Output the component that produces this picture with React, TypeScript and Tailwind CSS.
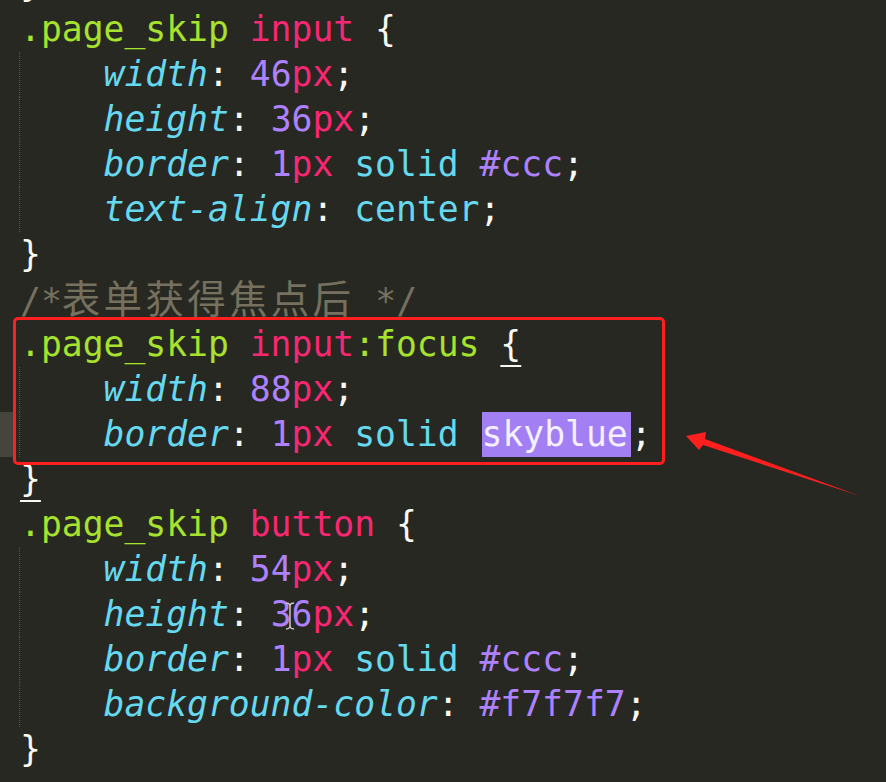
import React from 'react';

const G = 'text-[#a6e22e]';
const R = 'text-[#f92672]';
const C = 'text-[#66d9ef]';
const P = 'text-[#ae81ff]';
const W = 'text-[#f8f8f2]';

type LineProps = { indent?: boolean; mark?: boolean; children?: React.ReactNode };

const Line = ({ indent, mark, children }: LineProps) => (
  <div className="flex h-[45px] whitespace-pre leading-[45px]">
    <div className="flex w-[19px] shrink-0">
      {mark && <div className="w-[13px] bg-[#46453d]" />}
    </div>
    <div className={indent ? 'border-l border-dotted border-[#55554c]' : 'border-l border-transparent'}>
      {indent && '    '}
      {children}
    </div>
  </div>
);

const Prop = ({ name }: { name: string }) => (
  <>
    <span className={`${C} italic`}>{name}</span>
    <span className={W}>: </span>
  </>
);

const Px = ({ n }: { n: string }) => (
  <>
    <span className={P}>{n}</span>
    <span className={R}>px</span>
  </>
);

const Semi = () => <span className={W}>;</span>;

const App = () => {
  return (
    <div className="relative h-[782px] w-[886px] overflow-hidden bg-[#272822] font-[family-name:'DejaVu_Sans_Mono','Noto_Sans_CJK_SC',monospace] text-[34.7px]">
      <div className="-mt-[38px] flex flex-col">
        <Line><span className={W}>{'}'}</span></Line>
        <Line>
          <span className={G}>.page_skip </span>
          <span className={R}>input</span>
          <span className={W}> {'{'}</span>
        </Line>
        <Line indent><Prop name="width" /><Px n="46" /><Semi /></Line>
        <Line indent><Prop name="height" /><Px n="36" /><Semi /></Line>
        <Line indent>
          <Prop name="border" /><Px n="1" />
          <span className={C}> solid </span>
          <span className={P}>#ccc</span>
          <Semi />
        </Line>
        <Line indent>
          <Prop name="text-align" />
          <span className={C}>center</span>
          <Semi />
        </Line>
        <Line><span className={W}>{'}'}</span></Line>
        <Line>
          <span className="text-[#75715e]">
            /*<span className="text-[38.5px] leading-[45px] tracking-[3.3px]">表单获得焦点后</span> */
          </span>
        </Line>
        <Line>
          <span className={G}>.page_skip </span>
          <span className={R}>input</span>
          <span className={G}>:focus </span>
          <span className={`${W} underline decoration-2 underline-offset-[9px]`}>{'{'}</span>
        </Line>
        <Line indent><Prop name="width" /><Px n="88" /><Semi /></Line>
        <Line indent mark>
          <Prop name="border" /><Px n="1" />
          <span className={C}> solid </span>
          <span className="ml-[2px] inline-block h-[45px] bg-[#a37ff4] pr-[3px] text-[#f4f0ff]">skyblue</span>
          <Semi />
        </Line>
        <Line><span className={`${W} underline decoration-2 underline-offset-[9px]`}>{'}'}</span></Line>
        <Line>
          <span className={G}>.page_skip </span>
          <span className={R}>button</span>
          <span className={W}> {'{'}</span>
        </Line>
        <Line indent><Prop name="width" /><Px n="54" /><Semi /></Line>
        <Line indent><Prop name="height" /><Px n="36" /><Semi /></Line>
        <Line indent>
          <Prop name="border" /><Px n="1" />
          <span className={C}> solid </span>
          <span className={P}>#ccc</span>
          <Semi />
        </Line>
        <Line indent>
          <Prop name="background-color" />
          <span className={P}>#f7f7f7</span>
          <Semi />
        </Line>
        <Line><span className={W}>{'}'}</span></Line>
      </div>

      {/* annotation box */}
      <div className="pointer-events-none absolute left-[13px] top-[317px] h-[148px] w-[652px] rounded-[5px] border-[3px] border-[#ff1f1f]" />

      {/* annotation arrow + text cursor */}
      <svg className="pointer-events-none absolute left-0 top-0" width="886" height="782">
        <polygon points="686,436 706,432 705,439 860,496 703,445 699,450" fill="#ff1f1f" />
        <g stroke="#c8c8c8" strokeWidth="1.5" fill="none">
          <path d="M290 604 V628" />
          <path d="M286 603 Q289 603 290 605 Q291 603 294 603" />
          <path d="M286 629 Q289 629 290 627 Q291 629 294 629" />
        </g>
      </svg>
    </div>
  );
};

export default App;
